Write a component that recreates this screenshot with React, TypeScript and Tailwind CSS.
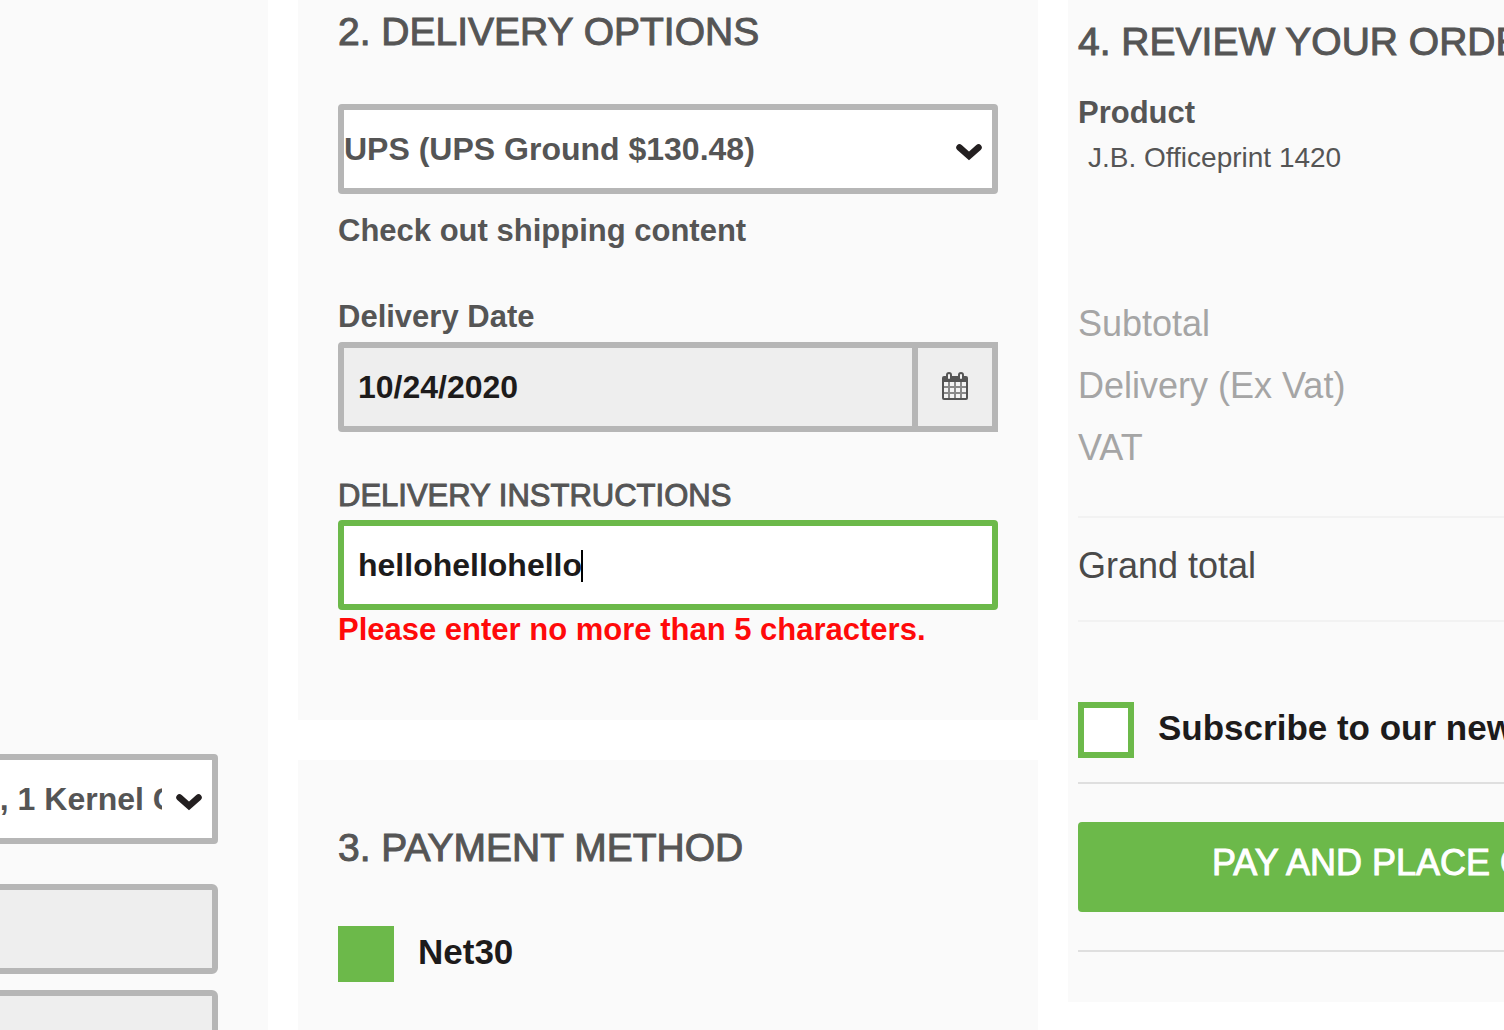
import { useState } from 'react';

const heading = 'text-[39px] leading-[48px] whitespace-nowrap [-webkit-text-stroke:1px_currentColor]';
const label = 'block text-[31px] leading-[40px] whitespace-nowrap';
const field = 'block w-full h-[90px] border-[6px] border-[#b6b6b6] text-[32px] font-bold outline-none';
const checkbox = 'appearance-none size-14 shrink-0 border-[6px] border-[#6cb94a] bg-white checked:bg-[#6cb94a]';

function Chevron() {
  return (
    <svg className="absolute right-4 top-[38px] w-[26px] h-[20px] pointer-events-none" viewBox="0 0 26 20" fill="none">
      <path d="M3.5 5.5L13 14L22.5 5.5" stroke="#231f20" strokeWidth="6.5" strokeLinecap="round" />
    </svg>
  );
}

function CalendarIcon() {
  return (
    <svg className="w-[26px] h-[28px]" viewBox="0 0 26 28" fill="none">
      <rect x="0" y="4" width="26" height="24" rx="2" fill="#555" />
      <rect x="2" y="10" width="22" height="16" fill="#f4f4f4" />
      <path d="M7 10v16M13 10v16M19 10v16M2 15h22M2 21h22" stroke="#8a8a8a" strokeWidth="2" />
      <rect x="5" y="1" width="4" height="7" rx="2" fill="#f4f4f4" stroke="#555" strokeWidth="2" />
      <rect x="17" y="1" width="4" height="7" rx="2" fill="#f4f4f4" stroke="#555" strokeWidth="2" />
    </svg>
  );
}

export default function App() {
  const [instructions, setInstructions] = useState('hellohellohello');
  const [net30, setNet30] = useState(true);
  const [subscribe, setSubscribe] = useState(false);

  return (
    <div className="h-screen overflow-hidden bg-white text-[#555] font-['Liberation_Sans',Arial,sans-serif] grid grid-cols-[268fr_740fr_436fr] gap-[30px]">
      {/* Address column */}
      <section className="min-w-0 overflow-hidden bg-[#fafafa] pt-[754px] pr-[50px]">
        <div className="-ml-6">
          <div className="relative">
            <select aria-label="Address" className={`${field} appearance-none rounded-[4px] bg-white pr-[50px]`}>
              <option>s, 1 Kernel Court</option>
            </select>
            <Chevron />
          </div>
          <input aria-label="Company" type="text" disabled className={`${field} mt-10 rounded-[6px] bg-[#eee]`} />
          <input aria-label="Street" type="text" disabled className={`${field} mt-4 rounded-[6px] bg-[#eee]`} />
        </div>
      </section>

      <div className="min-w-0 flex flex-col gap-10">
        {/* Delivery */}
        <section className="bg-[#fafafa] px-10 pt-2 pb-[70px]">
          <h2 className={heading}>2. DELIVERY OPTIONS</h2>
          <div className="relative mt-12">
            <select aria-label="Delivery option" className={`${field} appearance-none rounded-[4px] bg-white pr-[50px]`}>
              <option>UPS (UPS Ground $130.48)</option>
            </select>
            <Chevron />
          </div>
          <p className={`${label} mt-[17px] font-bold`}>Check out shipping content</p>

          <label htmlFor="date" className={`${label} mt-[46px] font-bold`}>Delivery Date</label>
          <div className="flex mt-[5px]">
            <input id="date" type="text" readOnly value="10/24/2020" className={`${field} min-w-0 flex-1 rounded-l-[4px] bg-[#eee] px-[14px] text-[#1d1b1b]`} />
            <button type="button" aria-label="Open calendar" className="w-20 h-[90px] shrink-0 border-[6px] border-l-0 border-[#b6b6b6] bg-[#eee] pb-[2px] flex items-center justify-center">
              <CalendarIcon />
            </button>
          </div>

          <label htmlFor="instructions" className={`${label} mt-11 [-webkit-text-stroke:1px_currentColor]`}>DELIVERY INSTRUCTIONS</label>
          <div className="relative mt-1">
            <input
              id="instructions"
              type="text"
              value={instructions}
              onChange={(e) => setInstructions(e.target.value)}
              className="block w-full h-[90px] rounded-[4px] border-[6px] border-[#6cb94a] bg-white px-[14px] text-[32px] font-bold text-[#1d1b1b] outline-none"
            />
            <span className="absolute left-[243px] top-[30px] h-8 w-[2px] bg-black" />
          </div>
          <p className={`${label} font-bold text-[#ff0a0a]`}>Please enter no more than 5 characters.</p>
        </section>

        {/* Payment */}
        <section className="flex-1 bg-[#fafafa] px-10 pt-16">
          <h2 className={heading}>3. PAYMENT METHOD</h2>
          <label className="flex gap-6 mt-[54px] text-[#1d1b1b]">
            <input type="checkbox" checked={net30} onChange={(e) => setNet30(e.target.checked)} className={checkbox} />
            <span className="text-[35px] leading-[52px] font-bold">Net30</span>
          </label>
        </section>
      </div>

      {/* Review */}
      <section className="min-w-0 self-start overflow-hidden bg-[#fafafa] pl-[10px] pt-[18px] pb-[50px]">
        <h2 className={heading}>4. REVIEW YOUR ORDER</h2>
        <h3 className={`${label} mt-[27px] font-bold`}>Product</h3>
        <p className="mt-[5px] pl-[10px] text-[28px] leading-[40px]">J.B. Officeprint 1420</p>

        <div className="mt-[115px] text-[36px] leading-[62px] text-[#a5a5a5]">
          <p>Subtotal</p>
          <p>Delivery (Ex Vat)</p>
          <p>VAT</p>
        </div>
        <p className="mt-[37px] border-y-2 border-[#f2f2f2] pb-[6px] text-[36px] leading-[96px] text-[#4a4a4a]">Grand total</p>

        <label className="flex gap-6 mt-20 text-[#1d1b1b]">
          <input type="checkbox" checked={subscribe} onChange={(e) => setSubscribe(e.target.checked)} className={checkbox} />
          <span className="text-[35px] leading-[52px] whitespace-nowrap font-bold">Subscribe to our newsletter</span>
        </label>
        <div className="mt-6 border-y-2 border-[#dfdfdf] py-[38px]">
          <button type="button" className="block w-full h-[90px] overflow-hidden rounded-l-[4px] bg-[#6cb94a] pl-[134px] pb-2 text-left text-[36px] whitespace-nowrap text-white [-webkit-text-stroke:1px_currentColor]">
            PAY AND PLACE ORDER
          </button>
        </div>
      </section>
    </div>
  );
}
